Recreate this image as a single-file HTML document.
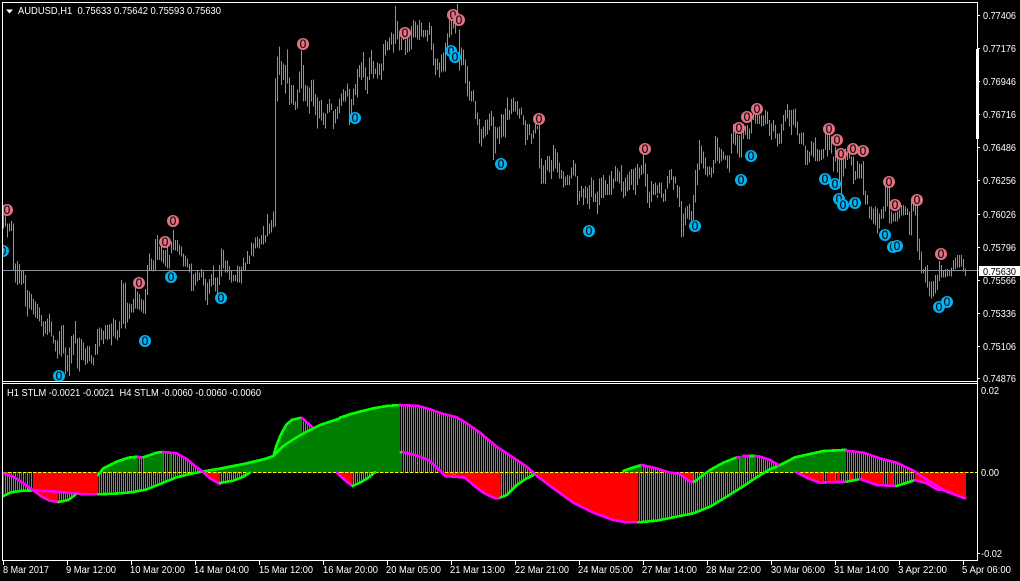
<!DOCTYPE html>
<html><head><meta charset="utf-8"><title>AUDUSD,H1</title>
<style>
html,body{margin:0;padding:0;background:#000;width:1020px;height:581px;overflow:hidden}
svg{display:block}
text{font-family:"Liberation Sans",sans-serif;font-size:10.5px;fill:#fff}
.b{fill:none;stroke:#2fdc1f;stroke-width:3;shape-rendering:crispEdges}
.m text{font-size:12px;font-weight:normal;fill:#10141c;text-anchor:middle;stroke:#10141c;stroke-width:.25}
.r{fill:#e8707f}.c{fill:#00b4f5}
.l{fill:none;stroke-width:8;stroke-linejoin:round;stroke-linecap:round;shape-rendering:crispEdges}
.g{stroke:#00ff00}.p{stroke:#ff00ff}
</style></head><body>
<svg width="1020" height="581" viewBox="0 0 1020 581" xmlns="http://www.w3.org/2000/svg">
<defs>
<pattern id="h" width="6" height="6" patternUnits="userSpaceOnUse"><rect x="3" y="0" width="3" height="6" fill="#00b0f0"/></pattern>
<pattern id="hr" width="12" height="6" patternUnits="userSpaceOnUse"><rect x="3" y="0" width="3" height="6" fill="#ff0000"/><rect x="9" y="0" width="3" height="6" fill="#00b0f0"/></pattern>
</defs>
<rect width="1020" height="581" fill="#000"/>

<!-- price bars: bottom-left -->
<svg x="0" y="195" width="340" height="195" viewBox="-0.5 0 1020 585"><path class="b" d="M10 60V100M16 65V95M22 85V128M28 85V110M34 78V108M40 85V225M46 205V262M52 198V270M58 207V265M64 225V270M70 228V265M76 240V335M82 285V365M88 290V340M94 297V345M100 312V358M106 320V368M112 327V372M118 338V380M124 360V395M130 380V425M136 378V415M142 370V420M148 355V412M154 380V425M160 422V445M166 435V470M172 437V490M178 408V478M184 392V485M190 390V475M196 457V537M202 480V530M208 458V543M214 423V505M220 418V480M226 378V445M232 430V520M238 427V530M244 432V495M250 442V497M256 460V510M262 453V505M268 453V498M274 480V505M280 487V512M286 447V480M292 402V478M298 398V455M304 400V435M310 407V447M316 390V432M322 390V435M328 388V432M334 385V452M340 370V425M346 375V430M352 405V437M358 380V428M364 255V400M370 265V387M376 263V400M382 322V382M388 325V372M394 327V352M400 312V352M406 275V340M412 290V342M418 297V345M424 312V350M430 315V355M436 282V357M442 210V300M448 175V228M454 190V225M460 197V230M466 132V228M472 120V195M478 155V195M484 145V200M490 165V205M496 165V215M502 125V220M508 180V220M514 140V175M520 105V165M526 135V167M532 135V170M538 148V180M544 155V185M550 175V215M556 182V215M562 190V217M568 207V233M574 205V288M580 237V288M586 232V272M592 227V260M598 232V255M604 222V248M610 230V272M616 252V317M622 262V330M628 252V297M634 237V275M640 212V270M646 248V290M652 248V297M658 210V270M664 160V245M670 165V220M676 197V232M682 197V232M688 213V255M694 225V263M700 240V260M706 240V258M712 212V263M718 215V263M724 215V265M730 187V225M736 202V225M742 168V207M748 182V207M754 142V182M760 145V185M766 127V160M772 125V157M778 130V160M784 120V148M790 93V148M796 120V142M802 57V125M808 85V117M814 75V112M820 50V97M826 0V95"/></svg>

<!-- price bars: top-left -->
<svg x="0" y="0" width="340" height="195" viewBox="-0.5 0 1020 585"><path class="b" d="M826 235V585M832 170V305M838 140V225M844 183V255M850 190V240M856 195V280M862 148V250M868 232V315M874 255V310M880 255V315M886 305V330M892 268V325M898 215V278M904 152V265M910 195V305M916 255V303M922 258V320M928 263V340M934 240V305M940 238V320M946 282V345M952 293V385M958 303V355M964 300V362M970 337V375M976 340V385M982 312V340M988 297V338M994 310V330M1000 333V387M1006 327V370M1012 320V357M1018 295V340"/></svg>

<!-- price bars: top-middle -->
<svg x="340" y="0" width="340" height="195" viewBox="-0.5 0 1020 585"><path class="b" d="M4 280V318M10 267V305M16 273V305M22 250V290M28 267V375M34 297V365M40 265V315M46 252V285M52 207V293M58 195V232M64 187V240M70 156V232M76 202V270M82 230V282M88 172V240M94 150V222M100 183V235M106 205V222M112 187V235M118 190V225M124 190V240M130 132V212M136 120V167M142 125V152M148 113V150M154 98V133M160 102V158M166 18V132M172 63V118M178 100V152M184 115V150M190 90V120M196 118V165M202 100V158M208 115V155M214 78V148M220 60V112M226 65V112M232 75V118M238 60V120M244 67V110M250 90V112M256 90V110M262 90V125M268 67V105M274 78V150M280 130V197M286 175V225M292 175V210M298 187V232M304 163V217M310 157V215M316 128V215M322 100V143M328 55V113M334 30V105M340 55V85M346 65V100M352 12V45M358 88V212M364 142V197M370 148V195M376 178V250M382 198V290M388 243V302M394 273V305M400 270V305M406 303V357M412 337V375M418 357V430M424 387V440M430 380V415M436 360V410M442 358V403M448 340V390M454 333V378M460 350V480M466 380V460M472 382V415M478 380V432M484 342V412M490 343V410M496 325V413M502 292V360M508 330V358M514 297V342M520 292V335M526 305V335M532 303V345M538 325V355M544 322V345M550 347V375M556 362V435M562 372V420M568 372V405M574 400V432M580 390V415M586 372V400M592 378V387M598 375V505M604 475V552M610 497V550M616 480V552M622 468V512M628 468V518M634 480V537M640 435V515M646 445V505M652 457V517M658 487V535M664 510V537M670 515V563M676 530V557M682 525V555M688 527V555M694 503V535M700 480V527M706 490V530M712 528V585M718 573V585M724 558V585M730 565V585M736 558V585M742 563V585M748 555V585M754 533V585M760 540V585M766 580V585M772 575V585M778 535V585M784 533V585M790 525V585M796 540V585M802 552V585M808 527V585M814 513V585M820 535V565M826 498V545M832 505V545M838 515V550M844 495V575M850 545V585M856 533V585M862 523V575M868 515V570M874 507V555M880 507V570M886 503V585M892 492V555M898 503V535M904 495V525M910 465V520M916 490V560M922 522V585M928 575V585M934 543V585M940 552V585M946 548V585M952 555V580M958 548V580M964 548V585M970 580V585M976 567V585M982 528V565M988 510V550M994 507V540M1000 530V570M1006 530V550M1012 555V585M1018 560V585"/></svg>

<!-- price bars: bottom-middle -->
<svg x="340" y="195" width="340" height="195" viewBox="-0.5 0 1020 585"><path class="b" d="M712 0V30M718 0V18M724 0V6M730 0V30M736 0V9M742 0V27M748 0V42M754 0V6M760 0V21M766 0V21M772 0V57M778 0V30M784 0V9M790 0V9M850 0V9M856 0V3M922 0V24M928 0V39M934 0V21M952 0V9M964 0V9M970 0V21M976 0V18M1012 0V9M1018 0V36"/></svg>

<!-- price bars: top-right -->
<svg x="680" y="0" width="340" height="195" viewBox="-0.5 0 1020 585"><path class="b" d="M46 510V585M52 490V555M58 420V510M64 437V490M70 455V505M76 473V525M82 500V530M88 500V525M94 503V533M100 480V520M106 408V490M112 413V483M118 442V490M124 447V483M130 455V478M136 467V480M142 467V505M148 467V518M154 400V460M160 372V430M166 383V437M172 405V460M178 407V473M184 385V473M190 372V417M196 378V405M202 375V417M208 385V418M214 345V400M220 335V360M226 335V370M232 345V372M238 345V372M244 345V380M250 347V378M256 330V373M262 335V372M268 360V408M274 370V420M280 360V395M286 375V415M292 400V440M298 400V432M304 372V430M310 345V392M316 330V365M322 312V355M328 330V380M334 330V405M340 328V375M346 325V382M352 365V405M358 400V432M364 398V432M370 398V437M376 437V495M382 450V495M388 455V487M394 423V467M400 427V472M406 412V483M412 447V485M418 450V483M424 448V480M430 447V475M436 375V450M442 400V470M448 400V450M454 410V460M460 470V515M466 440V485M472 470V518M478 480V565M484 480V585M490 475V530M496 445V505M502 455V480M508 460V475M514 470V497M520 470V552M526 513V540M532 483V535M538 490V535M544 492V535M550 483V585M556 573V585M616 550V585M622 555V585M628 560V585"/></svg>

<!-- price bars: bottom-right -->
<svg x="680" y="195" width="340" height="195" viewBox="-0.5 0 1020 585"><path class="b" d="M4 18V128M10 55V125M16 38V90M22 33V70M28 27V75M34 48V88M40 0V75M46 0V22M556 0V28M562 0V28M568 35V70M574 35V75M580 40V85M586 35V90M592 40V115M598 55V100M604 42V72M610 35V70M616 0V50M622 0V35M628 0V85M634 50V85M640 55V80M646 52V80M652 50V80M658 45V70M664 30V62M670 30V62M676 35V60M682 40V60M688 50V120M694 15V122M700 10V50M706 30V62M712 28V170M718 130V195M724 170V235M730 222V235M736 215V262M742 210V278M748 260V305M754 260V310M760 258V305M766 240V295M772 240V285M778 198V258M784 210V247M790 225V248M796 222V247M802 222V245M808 225V243M814 218V245M820 195V225M826 187V222M832 180V218M838 180V218M844 180V215M850 192V230M856 220V243"/></svg>

<!-- current price line -->
<rect x="3" y="270" width="976" height="1" fill="#8a9196"/>

<!-- markers -->
<g class="m">
<circle class="r" cx="303" cy="44" r="6"/><text x="303" y="48.2">0</text>
<circle class="r" cx="405" cy="33" r="6"/><text x="405" y="37.2">0</text>
<circle class="r" cx="453" cy="15" r="6"/><text x="453" y="19.2">0</text>
<circle class="r" cx="459" cy="20" r="6"/><text x="459" y="24.2">0</text>
<circle class="r" cx="539" cy="119" r="6"/><text x="539" y="123.2">0</text>
<circle class="r" cx="645" cy="149" r="6"/><text x="645" y="153.2">0</text>
<circle class="r" cx="7" cy="210" r="6"/><text x="7" y="214.2">0</text>
<circle class="r" cx="139" cy="283" r="6"/><text x="139" y="287.2">0</text>
<circle class="r" cx="165" cy="242" r="6"/><text x="165" y="246.2">0</text>
<circle class="r" cx="173" cy="221" r="6"/><text x="173" y="225.2">0</text>
<circle class="r" cx="739" cy="128" r="6"/><text x="739" y="132.2">0</text>
<circle class="r" cx="747" cy="117" r="6"/><text x="747" y="121.2">0</text>
<circle class="r" cx="757" cy="109" r="6"/><text x="757" y="113.2">0</text>
<circle class="r" cx="829" cy="129" r="6"/><text x="829" y="133.2">0</text>
<circle class="r" cx="837" cy="140" r="6"/><text x="837" y="144.2">0</text>
<circle class="r" cx="841" cy="154" r="6"/><text x="841" y="158.2">0</text>
<circle class="r" cx="853" cy="149" r="6"/><text x="853" y="153.2">0</text>
<circle class="r" cx="863" cy="151" r="6"/><text x="863" y="155.2">0</text>
<circle class="r" cx="889" cy="182" r="6"/><text x="889" y="186.2">0</text>
<circle class="r" cx="895" cy="205" r="6"/><text x="895" y="209.2">0</text>
<circle class="r" cx="917" cy="200" r="6"/><text x="917" y="204.2">0</text>
<circle class="r" cx="941" cy="254" r="6"/><text x="941" y="258.2">0</text>
<circle class="c" cx="355" cy="118" r="6"/><text x="355" y="122.2">0</text>
<circle class="c" cx="451" cy="51" r="6"/><text x="451" y="55.2">0</text>
<circle class="c" cx="455" cy="57" r="6"/><text x="455" y="61.2">0</text>
<circle class="c" cx="501" cy="164" r="6"/><text x="501" y="168.2">0</text>
<circle class="c" cx="589" cy="231" r="6"/><text x="589" y="235.2">0</text>
<circle class="c" cx="3" cy="251" r="6"/><text x="3" y="255.2">0</text>
<circle class="c" cx="59" cy="376" r="6"/><text x="59" y="380.2">0</text>
<circle class="c" cx="145" cy="341" r="6"/><text x="145" y="345.2">0</text>
<circle class="c" cx="171" cy="277" r="6"/><text x="171" y="281.2">0</text>
<circle class="c" cx="221" cy="298" r="6"/><text x="221" y="302.2">0</text>
<circle class="c" cx="751" cy="156" r="6"/><text x="751" y="160.2">0</text>
<circle class="c" cx="741" cy="180" r="6"/><text x="741" y="184.2">0</text>
<circle class="c" cx="825" cy="179" r="6"/><text x="825" y="183.2">0</text>
<circle class="c" cx="835" cy="184" r="6"/><text x="835" y="188.2">0</text>
<circle class="c" cx="839" cy="199" r="6"/><text x="839" y="203.2">0</text>
<circle class="c" cx="843" cy="205" r="6"/><text x="843" y="209.2">0</text>
<circle class="c" cx="855" cy="203" r="6"/><text x="855" y="207.2">0</text>
<circle class="c" cx="885" cy="235" r="6"/><text x="885" y="239.2">0</text>
<circle class="c" cx="893" cy="247" r="6"/><text x="893" y="251.2">0</text>
<circle class="c" cx="897" cy="246" r="6"/><text x="897" y="250.2">0</text>
<circle class="c" cx="939" cy="307" r="6"/><text x="939" y="311.2">0</text>
<circle class="c" cx="947" cy="302" r="6"/><text x="947" y="306.2">0</text>
<circle class="c" cx="695" cy="226" r="6"/><text x="695" y="230.2">0</text>
</g>
<rect x="0" y="0" width="2" height="381" fill="#000"/>

<!-- indicator left -->
<svg x="0" y="380" width="340" height="201" viewBox="0 0 1020 603" overflow="visible">
<path fill="url(#h)" d="M10 277V348L30 338 60 333 100 331V277Z"/>
<path fill="url(#hr)" d="M40 277V290L70 310 100 331V277Z"/>
<path fill="#f00" d="M100 277V331L125 350 150 362 175 366V337L220 340 255 343 295 343V277Z"/>
<path fill="url(#h)" d="M175 337V366L205 360 225 345V340Z"/>
<path fill="url(#h)" d="M295 277V343L360 340 400 336 440 328 480 312 530 292 570 282 605 275V277Z"/>
<path fill="#008000" d="M295 277L310 265 350 245 385 233 415 230V277Z"/>
<path fill="url(#h)" d="M415 230H432V277H415Z"/>
<path fill="#008000" d="M432 232L470 218 490 216V277H432Z"/>
<path fill="url(#h)" d="M490 216H508V277H490Z"/>
<path fill="#008000" d="M508 217H514V277H508Z"/>
<path fill="url(#h)" d="M514 218L530 220 560 237 585 258 605 272V277H514Z"/>
<path fill="#f00" d="M605 277L630 295 660 312V277Z"/>
<path fill="url(#h)" d="M660 277V309L700 302 730 290 750 278Z"/>
<path fill="#008000" d="M610 274L660 266 740 250 790 238 820 228 850 198 880 178 920 155 960 135 1020 115V277H610Z"/>
<path fill="#008000" d="M820 228L830 195 840 170 850 150 860 133 875 120 890 116 905 113V165L880 178 850 198Z"/>
<path fill="url(#h)" d="M905 113L935 140 905 165Z"/>
<path fill="none" stroke="#ff0" stroke-width="3" stroke-dasharray="10 5" d="M9 277H1020" shape-rendering="crispEdges"/>
<polyline class="l g" points="10,348 30,338 60,333 100,331"/>
<polyline class="l p" points="100,331 170,335 220,340 255,343 295,343"/>
<polyline class="l g" points="295,343 360,340 400,336 440,328 480,312 530,292 570,282 610,274 660,266 740,250 790,238 820,228 850,198 880,178 920,155 960,135 1020,115"/>
<polyline class="l p" points="10,280 40,290 70,310 100,331 125,350 150,362 175,366"/>
<polyline class="l g" points="175,366 205,360 225,345"/>
<polyline class="l g" points="295,285 310,265 350,245 385,233 415,230"/>
<polyline class="l p" points="415,231 430,232"/>
<polyline class="l g" points="430,232 470,218 490,216"/>
<polyline class="l p" points="490,216 530,220 560,237 585,258 605,272 630,295 660,312"/>
<polyline class="l g" points="660,309 700,302 730,290 750,278"/>
<polyline class="l g" points="820,228 830,195 840,170 850,150 860,133 875,120 890,116 905,113"/>
<polyline class="l p" points="905,113 935,140"/>
<polyline class="l p" points="1012,278 1020,287"/>
</svg>

<!-- indicator middle -->
<svg x="340" y="380" width="340" height="201" viewBox="0 0 1020 603" overflow="visible">
<path fill="#008000" d="M0 113L30 103 60 95 100 85 140 78 180 75V277H0Z"/>
<path fill="#f00" d="M0 277V285L20 305 38 318V277Z"/>
<path fill="url(#h)" d="M38 277V318L65 305 85 293 105 277Z"/>
<path fill="url(#h)" d="M180 75L235 78 270 88 310 102 350 112 380 130 420 158 470 200 520 233 560 260 590 287V277H180Z"/>
<path fill="#008000" d="M180 217H186V277H180Z"/>
<path fill="#f00" d="M310 277L315 288 345 290 375 293 400 315 430 338 465 355 482 357V277Z"/>
<path fill="url(#h)" d="M335 277V290H347V277Z"/>
<path fill="url(#h)" d="M482 277V352L500 345 530 315 560 295 580 285 590 277Z"/>
<path fill="#f00" d="M590 277V287L640 325 700 368 760 398 820 420 860 427 895 427V277Z"/>
<path fill="url(#h)" d="M895 277V427L950 422 1020 408V277Z"/>
<path fill="#008000" d="M850 273L880 262 905 255V277H850Z"/>
<path fill="url(#h)" d="M905 255L950 265 985 277H905Z"/>
<path fill="none" stroke="#ff0" stroke-width="3" stroke-dasharray="10 5" d="M0 277H1020" shape-rendering="crispEdges"/>
<polyline class="l g" points="0,113 30,103 60,95 100,85 140,78 180,75"/>
<polyline class="l p" points="180,75 235,78 270,88 310,102 350,112 380,130 420,158 470,200 520,233 560,260 590,287 640,325 700,368 760,398 820,420 860,427 895,427"/>
<polyline class="l g" points="895,427 950,422 1020,408"/>
<polyline class="l p" points="0,287 20,305 38,318"/>
<polyline class="l g" points="38,318 65,305 85,293 105,277"/>
<polyline class="l g" points="183,217 190,217"/>
<polyline class="l p" points="190,217 225,225 265,240 290,262 315,288 345,290 375,293 400,315 430,338 465,355 478,355"/>
<polyline class="l g" points="482,352 500,345 530,315 560,295 580,285"/>
<polyline class="l g" points="850,273 880,262 905,255"/>
<polyline class="l p" points="905,255 950,265 985,277 1020,282"/>
</svg>

<!-- indicator right -->
<svg x="680" y="380" width="340" height="201" viewBox="0 0 1020 603" overflow="visible">
<path fill="url(#h)" d="M0 277V408L40 400 90 380 140 350 180 325 230 292 265 277Z"/>
<path fill="#f00" d="M0 277V282L30 305 40 305V277Z"/>
<path fill="#008000" d="M90 277V270L130 248 170 232 175 232V277Z"/>
<path fill="url(#h)" d="M175 232H180V277H175Z"/>
<path fill="#008000" d="M180 228H195V277H180Z"/>
<path fill="url(#h)" d="M195 228H210V277H195Z"/>
<path fill="#008000" d="M210 228H228V277H210Z"/>
<path fill="url(#h)" d="M228 228L240 230 270 240 295 255 300 277H228Z"/>
<path fill="#008000" d="M265 270L300 255 345 232 390 222 430 213 490 210 498 210V277H265Z"/>
<path fill="url(#h)" d="M498 212L550 218 600 235 650 248 700 272 710 277H498Z"/>
<path fill="#f00" d="M350 277L385 295 420 308 430 308V277Z"/>
<path fill="url(#h)" d="M430 277H440V308H430Z"/>
<path fill="#f00" d="M440 277H465V308H440Z"/>
<path fill="url(#h)" d="M465 277H470V308H465Z"/>
<path fill="#f00" d="M470 277H480V308H470Z"/>
<path fill="url(#h)" d="M480 277H510V305H480Z"/>
<path fill="#f00" d="M510 277H522V302H510Z"/>
<path fill="url(#h)" d="M522 277H545V297H522Z"/>
<path fill="#f00" d="M545 277V297L590 315 610 317V277Z"/>
<path fill="url(#h)" d="M610 277H625V317H610Z"/>
<path fill="#f00" d="M625 277H640V318H625Z"/>
<path fill="url(#h)" d="M640 277V318L650 318 705 300V277Z"/>
<path fill="#f00" d="M705 277V300L740 310 770 328 790 330 855 355 858 355V277Z"/>
<path fill="none" stroke="#ff0" stroke-width="3" stroke-dasharray="10 5" d="M0 277H891" shape-rendering="crispEdges"/>
<polyline class="l g" points="0,408 40,400 90,380 140,350 180,325 230,292 265,270 300,255 345,232 390,222 430,213 490,210 498,210"/>
<polyline class="l p" points="498,212 550,218 600,235 650,248 700,272 750,305 800,335 855,355"/>
<polyline class="l p" points="0,282 30,305 42,305"/>
<polyline class="l g" points="42,305 50,300 90,270 130,248 170,232"/>
<polyline class="l p" points="172,232 178,232"/>
<polyline class="l p" points="190,228 210,228"/>
<polyline class="l g" points="212,228 224,228"/>
<polyline class="l p" points="226,228 240,230 270,240 295,255"/>
<polyline class="l p" points="350,277 385,295 420,308 500,305"/>
<polyline class="l g" points="500,305 540,297"/>
<polyline class="l p" points="540,297 590,315 650,318"/>
<polyline class="l g" points="650,318 705,300"/>
<polyline class="l p" points="705,300 740,310 770,328 790,330 855,355"/>
</svg>

<!-- frames -->
<g fill="#fff" shape-rendering="crispEdges">
<rect x="2" y="2" width="976" height="1"/>
<rect x="2" y="381" width="976" height="1"/>
<rect x="2" y="383" width="976" height="1"/>
<rect x="2" y="560" width="976" height="1"/>
<rect x="2" y="2" width="1" height="559"/>
<rect x="977" y="2" width="1" height="559"/>
<rect x="976" y="49" width="3" height="90"/>
<rect x="978" y="15" width="2" height="1"/><rect x="978" y="48" width="2" height="1"/><rect x="978" y="81" width="2" height="1"/><rect x="978" y="114" width="2" height="1"/><rect x="978" y="147" width="2" height="1"/><rect x="978" y="180" width="2" height="1"/><rect x="978" y="214" width="2" height="1"/><rect x="978" y="247" width="2" height="1"/><rect x="978" y="280" width="2" height="1"/><rect x="978" y="313" width="2" height="1"/><rect x="978" y="346" width="2" height="1"/><rect x="978" y="378" width="2" height="1"/>
<rect x="978" y="553" width="2" height="1"/>
<rect x="3" y="561" width="1" height="4"/><rect x="67" y="561" width="1" height="4"/><rect x="131" y="561" width="1" height="4"/><rect x="195" y="561" width="1" height="4"/><rect x="259" y="561" width="1" height="4"/><rect x="323" y="561" width="1" height="4"/><rect x="387" y="561" width="1" height="4"/><rect x="451" y="561" width="1" height="4"/><rect x="515" y="561" width="1" height="4"/><rect x="579" y="561" width="1" height="4"/><rect x="643" y="561" width="1" height="4"/><rect x="707" y="561" width="1" height="4"/><rect x="771" y="561" width="1" height="4"/><rect x="835" y="561" width="1" height="4"/><rect x="899" y="561" width="1" height="4"/><rect x="963" y="561" width="1" height="4"/>
</g>

<!-- header -->
<polygon points="6,9.5 13,9.5 9.5,13.5" fill="#fff"/>
<text x="18" y="14" textLength="203" lengthAdjust="spacingAndGlyphs" xml:space="preserve">AUDUSD,H1  0.75633 0.75642 0.75593 0.75630</text>
<text x="7" y="396" textLength="254" lengthAdjust="spacingAndGlyphs" xml:space="preserve">H1 STLM -0.0021 -0.0021  H4 STLM -0.0060 -0.0060 -0.0060</text>

<!-- price axis -->
<g>
<text x="983" y="19" textLength="33" lengthAdjust="spacingAndGlyphs">0.77406</text>
<text x="983" y="52" textLength="33" lengthAdjust="spacingAndGlyphs">0.77176</text>
<text x="983" y="85" textLength="33" lengthAdjust="spacingAndGlyphs">0.76946</text>
<text x="983" y="118" textLength="33" lengthAdjust="spacingAndGlyphs">0.76716</text>
<text x="983" y="151" textLength="33" lengthAdjust="spacingAndGlyphs">0.76486</text>
<text x="983" y="184" textLength="33" lengthAdjust="spacingAndGlyphs">0.76256</text>
<text x="983" y="218" textLength="33" lengthAdjust="spacingAndGlyphs">0.76026</text>
<text x="983" y="251" textLength="33" lengthAdjust="spacingAndGlyphs">0.75796</text>
<text x="983" y="284" textLength="33" lengthAdjust="spacingAndGlyphs">0.75566</text>
<text x="983" y="317" textLength="33" lengthAdjust="spacingAndGlyphs">0.75336</text>
<text x="983" y="350" textLength="33" lengthAdjust="spacingAndGlyphs">0.75106</text>
<text x="983" y="382" textLength="33" lengthAdjust="spacingAndGlyphs">0.74876</text>
<rect x="979" y="266" width="41" height="10" fill="#fff"/>
<text x="983" y="275" textLength="33" lengthAdjust="spacingAndGlyphs" style="fill:#000">0.75630</text>
<text x="981" y="394" textLength="18" lengthAdjust="spacingAndGlyphs">0.02</text>
<text x="981" y="476" textLength="18" lengthAdjust="spacingAndGlyphs">0.00</text>
<text x="981" y="557" textLength="21" lengthAdjust="spacingAndGlyphs">-0.02</text>
</g>

<!-- time axis -->
<g>
<text x="3" y="573" textLength="46" lengthAdjust="spacingAndGlyphs">8 Mar 2017</text>
<text x="66" y="573" textLength="50" lengthAdjust="spacingAndGlyphs">9 Mar 12:00</text>
<text x="130" y="573" textLength="55" lengthAdjust="spacingAndGlyphs">10 Mar 20:00</text>
<text x="194" y="573" textLength="55" lengthAdjust="spacingAndGlyphs">14 Mar 04:00</text>
<text x="259" y="573" textLength="54" lengthAdjust="spacingAndGlyphs">15 Mar 12:00</text>
<text x="323" y="573" textLength="55" lengthAdjust="spacingAndGlyphs">16 Mar 20:00</text>
<text x="386" y="573" textLength="55" lengthAdjust="spacingAndGlyphs">20 Mar 05:00</text>
<text x="450" y="573" textLength="55" lengthAdjust="spacingAndGlyphs">21 Mar 13:00</text>
<text x="515" y="573" textLength="54" lengthAdjust="spacingAndGlyphs">22 Mar 21:00</text>
<text x="578" y="573" textLength="55" lengthAdjust="spacingAndGlyphs">24 Mar 05:00</text>
<text x="642" y="573" textLength="55" lengthAdjust="spacingAndGlyphs">27 Mar 14:00</text>
<text x="706" y="573" textLength="55" lengthAdjust="spacingAndGlyphs">28 Mar 22:00</text>
<text x="771" y="573" textLength="54" lengthAdjust="spacingAndGlyphs">30 Mar 06:00</text>
<text x="834" y="573" textLength="55" lengthAdjust="spacingAndGlyphs">31 Mar 14:00</text>
<text x="898" y="573" textLength="49" lengthAdjust="spacingAndGlyphs">3 Apr 22:00</text>
<text x="962" y="573" textLength="49" lengthAdjust="spacingAndGlyphs">5 Apr 06:00</text>
</g>
</svg>
</body></html>
